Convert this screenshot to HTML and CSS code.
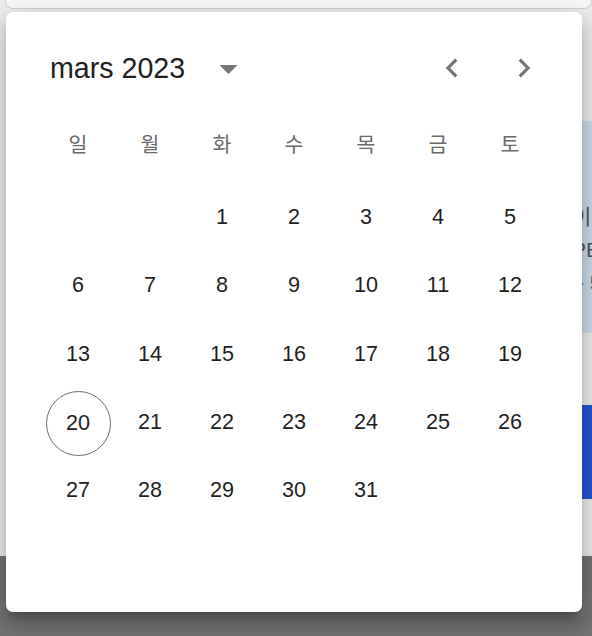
FILE: index.html
```html
<!DOCTYPE html>
<html lang="fr">
<head>
<meta charset="utf-8">
<title>Calendrier</title>
<link rel="stylesheet" href="styles.css">
</head>
<body>
<div class="page">
  <div class="topcard"></div>
  <div class="main">
    <div class="side">
      <div class="panel">
        <p class="panel-line">이</p>
        <p class="panel-line">PE</p>
        <p class="panel-line shift">- 5</p>
      </div>
      <div class="button"></div>
    </div>
  </div>
  <div class="backdrop"></div>
</div>

<div class="popup">
  <div class="header">
    <span class="label">mars 2023</span>
    <button class="switch" aria-label="vue année">
      <svg viewBox="0 0 24 24" width="43" height="43"><path d="M7 10l5 5 5-5z"/></svg>
    </button>
    <div class="nav">
      <button class="arrow" aria-label="mois précédent">
        <svg viewBox="0 0 24 24" width="38" height="38"><path d="M15.41 16.59 10.83 12l4.58-4.59L14 6l-6 6 6 6 1.41-1.41z"/></svg>
      </button>
      <button class="arrow" aria-label="mois suivant">
        <svg viewBox="0 0 24 24" width="38" height="38"><path d="M8.59 16.59 13.17 12 8.59 7.41 10 6l6 6-6 6-1.41-1.41z"/></svg>
      </button>
    </div>
  </div>

  <div class="weekdays">
    <span>일</span><span>월</span><span>화</span><span>수</span><span>목</span><span>금</span><span>토</span>
  </div>

  <div class="days">
    <span class="empty"></span><span class="empty"></span>
    <span class="day">1</span><span class="day">2</span><span class="day">3</span><span class="day">4</span><span class="day">5</span>
    <span class="day">6</span><span class="day">7</span><span class="day">8</span><span class="day">9</span><span class="day">10</span><span class="day">11</span><span class="day">12</span>
    <span class="day">13</span><span class="day">14</span><span class="day">15</span><span class="day">16</span><span class="day">17</span><span class="day">18</span><span class="day">19</span>
    <span class="day today">20</span><span class="day">21</span><span class="day">22</span><span class="day">23</span><span class="day">24</span><span class="day">25</span><span class="day">26</span>
    <span class="day">27</span><span class="day">28</span><span class="day">29</span><span class="day">30</span><span class="day">31</span>
  </div>
</div>
</body>
</html>
```

FILE: styles.css
```css
* { box-sizing: border-box; }

html, body {
  margin: 0;
  padding: 0;
}

body {
  width: 592px;
  height: 636px;
  overflow: hidden;
  background: #ececec;
  font-family: "Liberation Sans", Arial, "Noto Sans CJK KR", sans-serif;
  position: relative;
}

.page {
  display: flex;
  flex-direction: column;
  height: 636px;
}

.topcard {
  height: 9px;
  margin-left: 5px;
  background: #f8f8f8;
  border: 1px solid #d2d2d2;
  border-top: none;
  border-radius: 0 0 8px 8px;
}

.main {
  flex: 1;
  display: flex;
  justify-content: flex-end;
}

.side {
  width: 120px;
  padding-top: 112px;
  display: flex;
  flex-direction: column;
}

.panel {
  height: 212px;
  background: #cbdbea;
  padding: 79px 0 0 100px;
}

.panel-line {
  margin: 0;
  height: 33px;
  font-family: "Liberation Sans", "Noto Sans CJK KR", sans-serif;
  font-size: 21px;
  line-height: 33px;
  color: #555;
  white-space: nowrap;
}

.panel-line.shift {
  padding-left: 5px;
}

.button {
  height: 94px;
  margin-top: 72px;
  background: #2456d8;
}

.backdrop {
  height: 80px;
  background: #737373;
}

.popup {
  position: absolute;
  left: 6px;
  top: 12px;
  width: 576px;
  height: 600px;
  background: #fff;
  border-radius: 7px;
  box-shadow: 0 9px 9px -5px rgba(0,0,0,0.2), 0 14px 18px 2px rgba(0,0,0,0.14), 0 5px 25px 4px rgba(0,0,0,0.12);
}

.header {
  margin-top: 29px;
  height: 54px;
  padding: 0 39px 0 44px;
  display: flex;
  align-items: center;
}

.label {
  font-size: 28.6px;
  color: #212121;
  line-height: 54px;
}

button {
  border: none;
  background: none;
  padding: 0;
  margin: 0;
  display: flex;
  align-items: center;
  justify-content: center;
  cursor: pointer;
}

button svg { fill: #757575; display: block; }

.switch {
  width: 43px;
  height: 43px;
  margin-left: 22px;
  margin-top: 1px;
}

.nav {
  margin-left: auto;
  display: flex;
  gap: 34px;
}

.arrow {
  width: 38px;
  height: 38px;
}

.weekdays {
  margin-top: 28px;
  padding: 0 36px;
  display: grid;
  grid-template-columns: repeat(7, 72px);
  height: 40px;
}

.weekdays span {
  display: flex;
  align-items: center;
  justify-content: center;
  font-family: "Noto Sans CJK KR", sans-serif;
  font-size: 20.5px;
  color: #6a6a6a;
}

.days {
  margin-top: 20px;
  padding: 0 36px;
  display: grid;
  grid-template-columns: repeat(7, 72px);
  grid-auto-rows: 68.3px;
}

.day, .empty {
  display: flex;
  align-items: center;
  justify-content: center;
}

.day {
  font-size: 21.6px;
  color: #1f1f1f;
}

.today {
  justify-self: center;
  align-self: center;
  width: 65px;
  height: 65px;
  border: 1px solid #6e6e6e;
  border-radius: 50%;
  margin-top: 2px;
}
```
